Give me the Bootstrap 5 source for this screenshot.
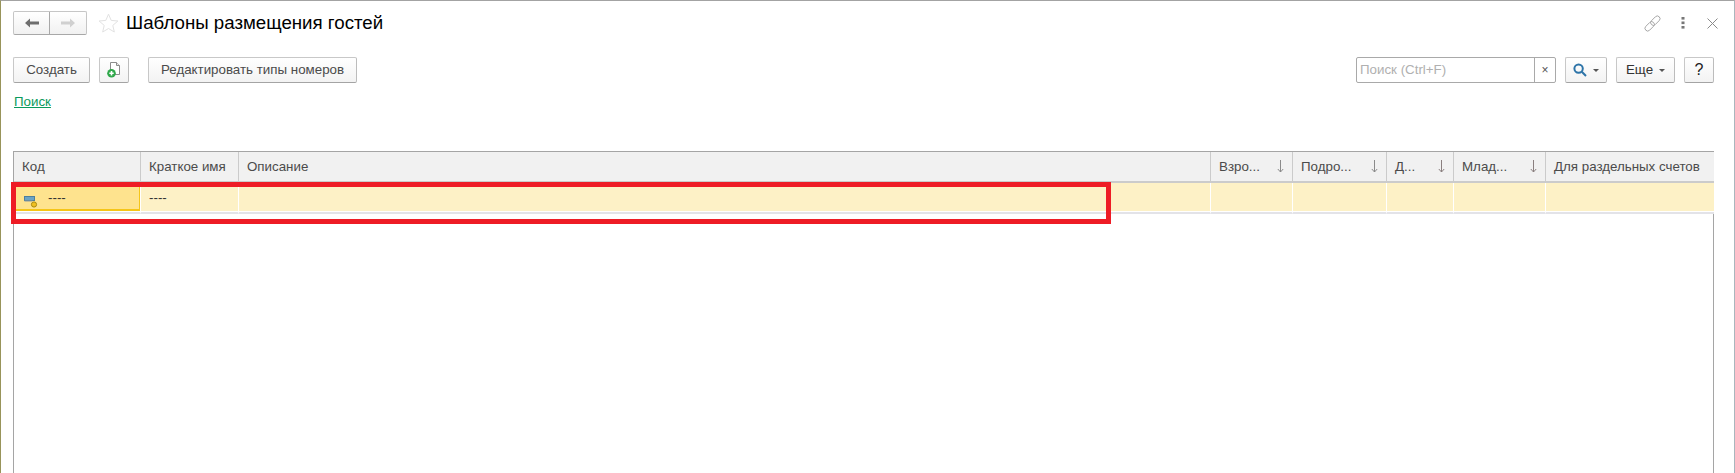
<!doctype html>
<html lang="ru">
<head>
<meta charset="utf-8">
<title>Шаблоны размещения гостей</title>
<link href="https://cdn.jsdelivr.net/npm/bootstrap@5.3.0/dist/css/bootstrap.min.css" rel="stylesheet">
<style>
html,body{height:100%;overflow:hidden;background:#fff}
body{font-family:"Liberation Sans",Arial,sans-serif;font-size:13.33px;color:#4b4b4b}
.app-frame{position:relative;height:473px;border-top:1px solid #a3a3a3;border-left:1px solid #98945a;border-right:1px solid #a9b6bd;padding:10px 20px 0 12px}
.title-row{height:24px;margin-bottom:22px}
.nav-pair{width:74px;height:24px;border:1px solid #c6c6c6;border-bottom-color:#a8a8a8;border-radius:2px;background:linear-gradient(#fff,#f1f1f1)}
.nav-pair span{flex:1 1 50%;display:flex;align-items:center;justify-content:center}
.nav-pair span:first-child{border-right:1px solid #a8a8a8}
.fav-star{margin-left:11px;flex:none}
.page-title{font-size:18.7px;color:#000;margin:0 0 0 7px;font-weight:400;line-height:24px}
.win-tools{margin-right:-4px}
.tool-dots{margin:0 22px 0 20px}
.cmd-row{height:26px}
.btn.cmd{height:26px;padding:0 12px;font-size:13.33px;line-height:24px;color:#4b4b4b;background:linear-gradient(#fff,#f3f3f3);border:1px solid #c8c8c8;border-bottom-color:#a4a4a4;border-right-color:#bcbcbc;border-radius:2px;white-space:nowrap;display:inline-flex;align-items:center;justify-content:center}
.btn.w-create{width:77px}
.btn.w-add{width:30px;margin-left:9px;padding:0}
.btn.w-edit{width:209px;margin-left:19px}
.btn.w-find{width:42px;margin-left:9px;padding:0}
.btn.w-more{width:59px;margin-left:9px;padding:0;color:#333}
.btn.w-help{width:30px;margin-left:9px;padding:0;font-size:16px;color:#222}
.caret-mark{display:inline-block;border-left:3px solid transparent;border-right:3px solid transparent;border-top:3px solid #555;margin-left:6px}
.search-box{width:200px;height:26px;border:1px solid #a9a9a9;border-radius:2px;background:#fff}
.search-hint{flex:1;color:#b0b0b0;padding-left:3px;line-height:24px}
.search-clear{width:21px;border-left:1px solid #a9a9a9;display:flex;align-items:center;justify-content:center;color:#555;font-size:12px}
.search-link{display:block;color:#0a9a5c;font-size:13.33px;line-height:16px;margin:11px 0 0 1px;width:max-content}
.grid-wrap{margin-top:41px;height:322px;border:1px solid #a5a5a5;border-bottom:0}
.table.tpl-grid{table-layout:fixed;width:1700px;margin:0;font-size:13.33px;color:#4b4b4b;border-collapse:separate;border-spacing:0}
.tpl-grid th,.tpl-grid td{font-weight:400;padding:0 8px;white-space:nowrap;overflow:hidden;vertical-align:middle}
.tpl-grid th{height:31px;background:#f1f1f1;border-bottom:2px solid #cbcbcb;border-right:1px solid #cbcbcb}
.tpl-grid th:last-child,.tpl-grid td:last-child{border-right:0}
.tpl-grid td{height:31px;background:#fdf1c6;border-right:1px solid #fff;border-bottom:2px solid #e3e3e8;box-shadow:inset 0 -1px 0 #fff;color:#333;padding-top:1px}
.tpl-grid td.cur-cell{background:#fee38e;box-shadow:inset 0 -1px 0 #fff,inset 0 -3px 0 #f5c518,inset 0 0 0 1px #f5c518}
.col-a{width:127px}.col-b{width:98px}.col-c{width:972px}.col-d{width:82px}.col-e{width:94px}.col-f{width:67px}.col-g{width:92px}.col-h{width:168px}
.hdr-flex{display:flex;justify-content:space-between;align-items:center}
.cell-flex{display:flex;align-items:center;gap:10px;padding-left:2px}
.row-ico{margin-top:8px;flex:none}
.red-mark{position:absolute;left:10px;top:181px;width:1100px;height:42px;border:5px solid #ee1c25;pointer-events:none}
</style>
</head>
<body>
<div class="app-frame">
  <div class="title-row d-flex align-items-center">
    <div class="nav-pair d-flex">
      <span><svg width="14" height="10" viewBox="0 0 14 10"><path d="M0 5 5 0.5V3.4H14V6.6H5V9.5Z" fill="#6e6e6e"/></svg></span>
      <span><svg width="14" height="10" viewBox="0 0 14 10"><path d="M14 5 9 0.5V3.4H0V6.6H9V9.5Z" fill="#d0d0d0"/></svg></span>
    </div>
    <svg class="fav-star" width="21" height="20" viewBox="0 0 21 20"><path d="M10.5 1.2 13.2 7.4 19.9 8 14.8 12.4 16.3 19 10.5 15.5 4.7 19 6.2 12.4 1.1 8 7.8 7.4Z" fill="#fff" stroke="#e2e2e2" stroke-width="1"/></svg>
    <h1 class="page-title">Шаблоны размещения гостей</h1>
    <div class="ms-auto d-flex align-items-center win-tools">
      <svg width="17" height="17" viewBox="0 0 17 17" fill="none" stroke="#a2a2a2" stroke-width="0.9"><g transform="rotate(-45 8.5 8.5)"><rect x="-1" y="5.8" width="11" height="5.4" rx="2.7"/><rect x="7" y="5.8" width="11" height="5.4" rx="2.7"/></g></svg>
      <svg class="tool-dots" width="4" height="12" viewBox="0 0 4 12" fill="#777"><rect x="0.5" y="0" width="3" height="2.6"/><rect x="0.5" y="4.5" width="3" height="2.6"/><rect x="0.5" y="9" width="3" height="2.6"/></svg>
      <svg width="11" height="11" viewBox="0 0 11 11" stroke="#8a8a8a" stroke-width="1"><path d="M.5.5 10.5 10.5M10.5.5.5 10.5"/></svg>
    </div>
  </div>

  <div class="cmd-row d-flex align-items-center">
    <button type="button" class="btn cmd w-create">Создать</button>
    <button type="button" class="btn cmd w-add">
      <svg width="14" height="16" viewBox="0 0 14 16"><path d="M3.5 .5H9.5L12.5 3.5V12.5H3.5Z" fill="#fff" stroke="#8b8b8b"/><path d="M9.5 .5V3.5H12.5" fill="#e8e8e8" stroke="#8b8b8b"/><circle cx="4.5" cy="11.2" r="4.3" fill="#2fa84a"/><path d="M2.3 11.2H6.7M4.5 9V13.4" stroke="#fff" stroke-width="1.6"/></svg>
    </button>
    <button type="button" class="btn cmd w-edit">Редактировать типы номеров</button>
    <div class="search-box d-flex ms-auto">
      <div class="search-hint">Поиск (Ctrl+F)</div>
      <div class="search-clear">×</div>
    </div>
    <button type="button" class="btn cmd w-find">
      <svg width="14" height="14" viewBox="0 0 14 14" fill="none" stroke="#2d74a8" stroke-width="2"><circle cx="5.6" cy="5.6" r="4.2"/><path d="M8.8 8.8 13 13"/></svg><span class="caret-mark"></span>
    </button>
    <button type="button" class="btn cmd w-more">Еще<span class="caret-mark"></span></button>
    <button type="button" class="btn cmd w-help">?</button>
  </div>

  <a href="#" class="search-link">Поиск</a>

  <div class="grid-wrap">
    <table class="table tpl-grid">
      <colgroup><col class="col-a"><col class="col-b"><col class="col-c"><col class="col-d"><col class="col-e"><col class="col-f"><col class="col-g"><col class="col-h"></colgroup>
      <thead>
        <tr>
          <th>Код</th>
          <th>Краткое имя</th>
          <th>Описание</th>
          <th><div class="hdr-flex"><span>Взро...</span><svg width="7" height="13" viewBox="0 0 7 13" fill="none" stroke="#8a8a8a"><path d="M3.5 0V12M.8 9 3.5 12 6.2 9"/></svg></div></th>
          <th><div class="hdr-flex"><span>Подро...</span><svg width="7" height="13" viewBox="0 0 7 13" fill="none" stroke="#8a8a8a"><path d="M3.5 0V12M.8 9 3.5 12 6.2 9"/></svg></div></th>
          <th><div class="hdr-flex"><span>Д...</span><svg width="7" height="13" viewBox="0 0 7 13" fill="none" stroke="#8a7f7f"><path d="M3.5 0V12M.8 9 3.5 12 6.2 9"/></svg></div></th>
          <th><div class="hdr-flex"><span>Млад...</span><svg width="7" height="13" viewBox="0 0 7 13" fill="none" stroke="#8a7f7f"><path d="M3.5 0V12M.8 9 3.5 12 6.2 9"/></svg></div></th>
          <th>Для раздельных счетов</th>
        </tr>
      </thead>
      <tbody>
        <tr>
          <td class="cur-cell"><div class="cell-flex"><svg class="row-ico" width="14" height="12" viewBox="0 0 14 12"><rect x=".5" y=".5" width="10" height="4" fill="#6ba3c4" stroke="#4d7f9c"/><rect x=".5" y="4.5" width="8" height="1" fill="#8a9aa3"/><circle cx="10" cy="8.5" r="2.6" fill="#f0c020" stroke="#a98a10"/></svg><span>----</span></div></td>
          <td>----</td>
          <td></td><td></td><td></td><td></td><td></td><td></td>
        </tr>
      </tbody>
    </table>
  </div>
  <div class="red-mark"></div>
</div>
<script src="https://cdn.jsdelivr.net/npm/bootstrap@5.3.0/dist/js/bootstrap.bundle.min.js"></script>
</body>
</html>
